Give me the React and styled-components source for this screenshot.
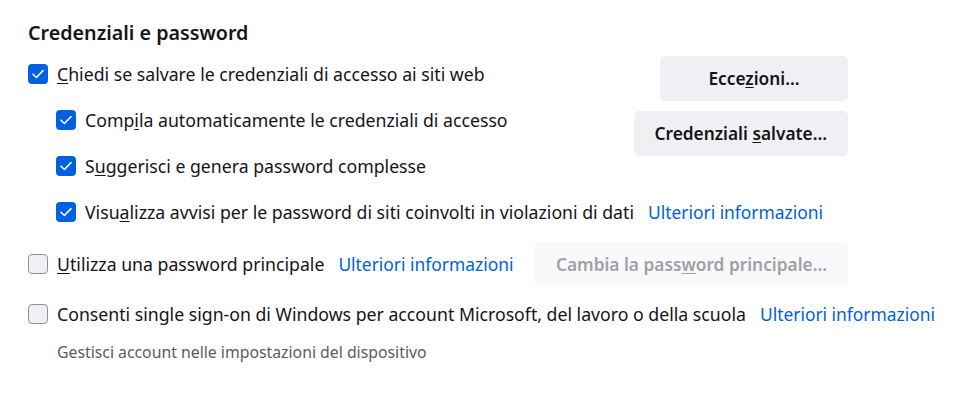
import React from "react";
import styled, { createGlobalStyle } from "styled-components";

const GlobalStyle = createGlobalStyle`
  body {
    margin: 0;
    background: #ffffff;
    color: #15141a;
    font-family: "Noto Sans", "Open Sans", sans-serif;
    font-size: 17.7px;
  }
`;

const Key = ({ children }) => <u>{children}</u>;

const Checkbox = ({ checked }) => (
  <Box $checked={checked}>
    {checked && (
      <svg width="14" height="14" viewBox="0 0 14 14" fill="none">
        <path d="M2 7.2 L5.4 10.5 L12 3.6" stroke="#fff" strokeWidth="1.6" strokeLinecap="round" strokeLinejoin="round" />
      </svg>
    )}
  </Box>
);

const App = () => {
  return (
    <Page>
      <GlobalStyle />
      <Heading>Credenziali e password</Heading>

      <TopGrid>
        <CheckRow $row={1}>
          <Checkbox checked />
          <Label>
            <Key>C</Key>hiedi se salvare le credenziali di accesso ai siti web
          </Label>
        </CheckRow>
        <CheckRow $row={2} $indent>
          <Checkbox checked />
          <Label>
            Comp<Key>i</Key>la automaticamente le credenziali di accesso
          </Label>
        </CheckRow>
        <CheckRow $row={3} $indent>
          <Checkbox checked />
          <Label>
            S<Key>u</Key>ggerisci e genera password complesse
          </Label>
        </CheckRow>
        <CheckRow $row={4} $indent $wide>
          <Checkbox checked />
          <Label>
            Visu<Key>a</Key>lizza avvisi per le password di siti coinvolti in violazioni di dati
          </Label>
          <Link href="#">Ulteriori informazioni</Link>
        </CheckRow>

        <ButtonStack>
          <Button>
            Ecce<Key>z</Key>ioni…
          </Button>
          <Button>
            Credenziali <Key>s</Key>alvate…
          </Button>
        </ButtonStack>
      </TopGrid>

      <SplitRow>
        <CheckRow>
          <Checkbox />
          <Label>
            <Key>U</Key>tilizza una password principale
          </Label>
          <Link href="#">Ulteriori informazioni</Link>
        </CheckRow>
        <Button disabled>
          Cambia la pass<Key>w</Key>ord principale…
        </Button>
      </SplitRow>

      <SsoRow>
        <Checkbox />
        <Label>
          Consenti single sign-on di Windows per account Microsoft, del lavoro o della scuola
        </Label>
        <Link href="#">Ulteriori informazioni</Link>
      </SsoRow>
      <Description>Gestisci account nelle impostazioni del dispositivo</Description>
    </Page>
  );
};

const Page = styled.div`
  width: 820px;
  padding: 20px 0 0 28px;
`;

const Heading = styled.h2`
  margin: 0;
  height: 31px;
  font-size: 19.7px;
  font-weight: 600;
  line-height: 26px;
  white-space: nowrap;
`;

const TopGrid = styled.div`
  display: grid;
  grid-template-columns: 1fr auto;
  grid-template-rows: repeat(4, 46px);
`;

const CheckRow = styled.div`
  display: flex;
  align-items: center;
  white-space: nowrap;
  min-width: 0;
  grid-row: ${(p) => p.$row || "auto"};
  grid-column: ${(p) => (p.$wide ? "1 / -1" : "1")};
  padding-left: ${(p) => (p.$indent ? "28px" : "0")};
`;

const Box = styled.span`
  flex: none;
  display: inline-flex;
  align-items: center;
  justify-content: center;
  box-sizing: border-box;
  width: 20px;
  height: 20px;
  border-radius: 4px;
  margin-right: 9px;
  background: ${(p) => (p.$checked ? "#0061e0" : "#f0f0f4")};
  border: ${(p) => (p.$checked ? "none" : "1px solid #8f8f9d")};
`;

const Label = styled.span`
  font-size: 17.7px;
  line-height: 24px;
  color: #15141a;

  u {
    text-underline-offset: 2px;
  }
`;

const Link = styled.a`
  margin-left: 14px;
  color: #0061e0;
  text-decoration: none;
  font-size: 17.4px;
  line-height: 24px;
`;

const ButtonStack = styled.div`
  grid-column: 2;
  grid-row: 1 / 4;
  align-self: start;
  display: flex;
  flex-direction: column;
  align-items: flex-end;
  gap: 10px;
  padding-top: 5px;
`;

const Button = styled.button`
  box-sizing: border-box;
  min-width: 188px;
  height: 45px;
  padding: 0 21px;
  border: none;
  border-radius: 5px;
  font-family: inherit;
  font-size: 17.3px;
  font-weight: 600;
  white-space: nowrap;
  background: ${(p) => (p.disabled ? "#f9f9fb" : "#f0f0f4")};
  color: ${(p) => (p.disabled ? "#a0a0a6" : "#15141a")};

  u {
    text-underline-offset: 2px;
  }
`;

const SplitRow = styled.div`
  display: flex;
  align-items: center;
  justify-content: space-between;
  height: 58px;
`;

const SsoRow = styled.div`
  display: flex;
  align-items: center;
  height: 42px;
  white-space: nowrap;
`;

const Description = styled.div`
  padding: 6px 0 0 29px;
  font-size: 15.8px;
  line-height: 22px;
  color: #5b5b66;
  white-space: nowrap;
`;

export default App;
